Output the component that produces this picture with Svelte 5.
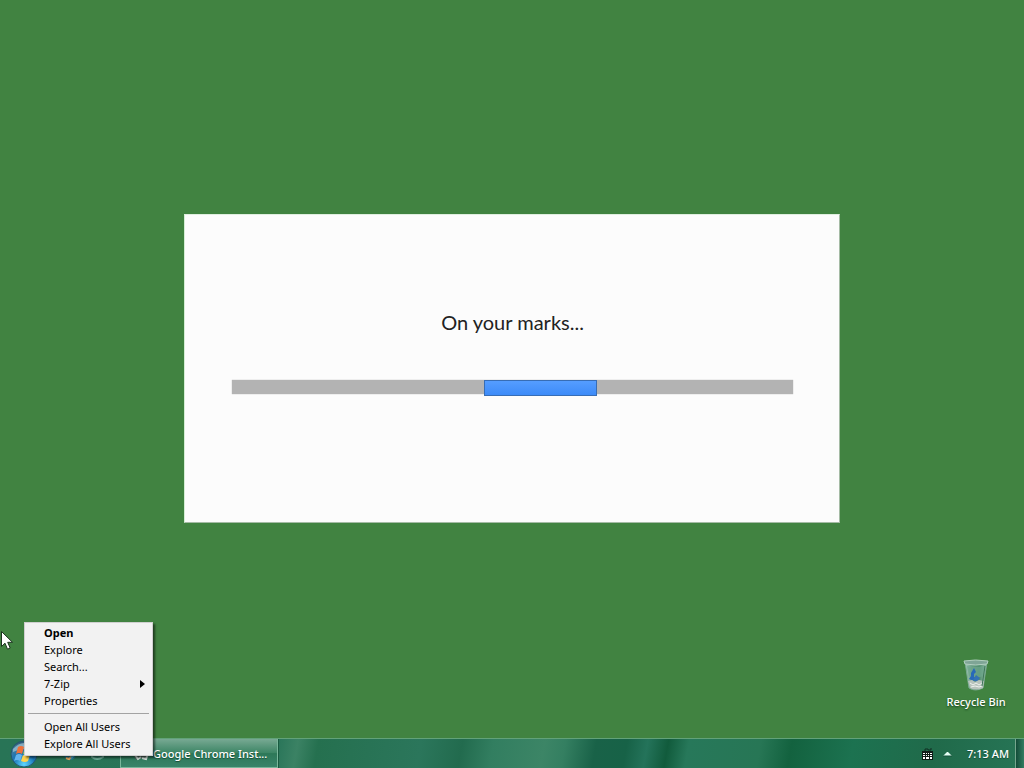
<script lang="ts">
  const groups = [
    ['Open', 'Explore', 'Search...', '7-Zip', 'Properties'],
    ['Open All Users', 'Explore All Users']
  ];
</script>

<main class="desktop">
  <section class="installer" aria-labelledby="status">
    <h1 id="status">On your marks...</h1>
    <div class="track" role="progressbar" aria-labelledby="status"><div class="chunk"></div></div>
  </section>

  <button class="bin">
    <svg width="26" height="32" viewBox="0 0 26 32" aria-hidden="true">
      <defs>
        <linearGradient id="glass" x1="0" x2="1" y1="0" y2="0">
          <stop offset="0" stop-color="#a5cbb8" />
          <stop offset=".3" stop-color="#6da088" />
          <stop offset=".65" stop-color="#4f8d6c" />
          <stop offset="1" stop-color="#a0c5b3" />
        </linearGradient>
      </defs>
      <path d="M2 3 6 29Q12 33 20 29L24 3Z" fill="url(#glass)" stroke="#79aa90" stroke-width="1" />
      <path d="M1 2Q12 0 25 2L24 5Q12 7 2 5Z" fill="#7fa596" stroke="#b2cfc0" stroke-width="1" />
      <path d="M4 7q8 2 18 0l-2 10q-7 3-14 0Z" fill="#6da58c" opacity=".7" />
      <path d="m8 14 3-5 2 4-2 2v3l3 1-3 3-5-2 2-3Z" fill="#2869b8" />
      <path d="m13 16 4 3-3 4-4-2Z" fill="#3472b3" />
      <path d="m5 22 4-1 3 2 4-2 5 1-1 7q-7 3-13 0Z" fill="#b8c3bc" />
      <path d="m7 24 3 2 3-2 3 2 3-2M8 28l4-1 4 1 3-1" fill="none" stroke="#eef1ee" />
      <path d="m22 7-3 20" stroke="#3d7559" />
    </svg>
    <span>Recycle Bin</span>
  </button>

  <footer class="taskbar">
    <button class="start" aria-label="Start">
      <svg width="28" height="28" viewBox="0 0 28 28" aria-hidden="true">
        <defs>
          <radialGradient id="orb" cx=".5" cy=".9" r=".85">
            <stop offset="0" stop-color="#5cd7ff" />
            <stop offset=".5" stop-color="#1873b5" />
            <stop offset=".85" stop-color="#467f9f" />
            <stop offset="1" stop-color="#315c79" />
          </radialGradient>
        </defs>
        <circle cx="14" cy="14" r="13" fill="url(#orb)" stroke="#24586e" />
        <path d="M3 9Q14-3 24 9 14 7 3 12Z" fill="#d8edf3" opacity=".45" />
        <path d="M8 7q3-2 6 0l-2 7q-3-2-6 0Z" fill="#ef713a" />
        <path d="M15 7q3 2 7 0l-2 7q-3 2-7 0Z" fill="#99c944" />
        <path d="M6 15q3-2 6 0l-2 6q-3-2-6 0Z" fill="#65b4ed" />
        <path d="M13 15q3 2 7 0l-2 6q-3 2-7 0Z" fill="#ffd34d" />
      </svg>
    </button>
    <div class="quick">
      <button aria-label="Media Player">
        <svg width="16" height="16" viewBox="0 0 16 16" aria-hidden="true">
          <circle cx="8" cy="8" r="6" fill="#257b9b" />
          <path d="m4 12 3 1 6-6" fill="none" stroke="#eea85c" stroke-width="2" />
          <path d="m9 12 5-5" stroke="#51b0d4" stroke-width="2" />
        </svg>
      </button>
      <button aria-label="Show desktop">
        <svg width="16" height="16" viewBox="0 0 16 16" aria-hidden="true">
          <path d="M2 4h11v7q-6 4-11 0Z" fill="#327d68" stroke="#72b39e" stroke-width="2" />
        </svg>
      </button>
    </div>
    <button class="task">
      <svg width="16" height="16" viewBox="0 0 16 16" aria-hidden="true">
        <path d="M2 3h11l2 8-3 4-4-2-5 2-2-4Z" fill="#51685f" />
        <path d="m2 10 3 4 3-2M9 13l4 1 2-5" fill="none" stroke="#d8e5df" stroke-width="2" />
      </svg>
      <span>Google Chrome Inst...</span>
    </button>
    <div class="tray">
      <button aria-label="Keyboard">
        <svg width="11" height="12" viewBox="0 0 11 12" aria-hidden="true">
          <path d="M3 3V1h3v1h3V0" fill="none" stroke="#102e23" />
          <path d="M0 3h11v9H0Z" fill="#101c18" />
          <path d="M1 5h2v1H1ZM4 5h1v1H4ZM6 5h1v1H6ZM8 5h2v1H8ZM1 7h2v1H1ZM4 7h1v1H4ZM6 7h1v1H6ZM8 7h2v1H8ZM1 9h2v2H1ZM4 9h3v2H4ZM8 9h2v2H8Z" fill="#fff" />
        </svg>
      </button>
      <button aria-label="Show hidden icons">
        <svg width="9" height="6" viewBox="0 0 9 6" aria-hidden="true">
          <path d="m0 5 4-4h1l4 4Z" fill="#e5fff3" />
          <path d="M0 5h9" stroke="#15513b" />
        </svg>
      </button>
      <time>7:13 AM</time>
    </div>
    <button class="peek" aria-label="Desktop peek"></button>
  </footer>

  <div class="menu" role="menu">
    {#each groups as group}
      <div class="group" role="group">
        {#each group as item}
          <button role="menuitem" class:default={item === 'Open'}>
            {item}
            {#if item === '7-Zip'}
              <svg width="5" height="8" viewBox="0 0 5 8" aria-hidden="true"><path d="m0 0 5 4-5 4Z" /></svg>
            {/if}
          </button>
        {/each}
      </div>
    {/each}
  </div>

  <svg class="cursor" width="12" height="19" viewBox="0 0 12 19" aria-hidden="true">
    <path d="M.5.5v15l3.500-3.300 2.500 6 2.700-1.200-2.500-5.700h4.800Z" fill="#fff" stroke="#1c3420" />
  </svg>
</main>

<style>
  :global(body) { margin: 0; }
  .desktop {
    position: relative;
    display: flex;
    flex-direction: column;
    min-height: 100vh;
    overflow: hidden;
    background: #418341;
    font: 11px/17px "Noto Sans", "Open Sans", sans-serif;
  }
  button {
    border: 0;
    padding: 0;
    background: none;
    color: inherit;
    font: inherit;
  }
  svg { display: block; flex: none; }
  .installer {
    position: absolute;
    top: 214px;
    left: 18%;
    right: 18%;
    box-sizing: border-box;
    height: 309px;
    padding: 91px 46px 0 47px;
    border: 1px solid #a5bba5;
    border-top-color: #e0efe0;
    border-left-color: #d5efd5;
    background: #fcfcfc;
  }
  h1 {
    margin: 0 0 42px;
    color: #222;
    font: 400 20px/32px Lato, "Open Sans", sans-serif;
    text-align: center;
  }
  .track {
    height: 14px;
    background: #b3b3b3;
    box-shadow: 0 0 1px #aaa;
  }
  .chunk {
    box-sizing: border-box;
    width: 20%;
    height: 16px;
    margin-left: 45%;
    border: 1px solid #376db5;
    background: linear-gradient(#559dff, #3d8bf8);
  }
  .bin {
    position: absolute;
    right: 16px;
    bottom: 58px;
    display: flex;
    flex-direction: column;
    align-items: center;
    gap: 2px;
    width: 64px;
    color: #fff;
    font-weight: 500;
    white-space: nowrap;
    text-shadow: 0 1px 2px #123d18;
  }
  .taskbar {
    display: flex;
    align-items: stretch;
    box-sizing: border-box;
    height: 30px;
    margin-top: auto;
    border-top: 1px solid #62a279;
    background:
      linear-gradient(100deg, #287456 0%, #297559 27%, #3b8264 29%, #25704f 31%, #2b765b 41%, #226b4e 45%, #327e60 48%, #3c8566 53%, #347f61 55%, #196248 58%, #176247 61%, #24735a 63%, #115b3c 65%, #27785a 67%, #277655 74%, #13623f 77%, #1c7250 83%, #206a4a 91%, #277556 100%);
    color: #fff;
    font-weight: 500;
  }
  .start { width: 28px; margin-left: 10px; }
  .quick { display: flex; align-items: center; gap: 12px; width: 58px; padding-left: 24px; }
  .task {
    display: flex;
    align-items: center;
    gap: 4px;
    box-sizing: border-box;
    width: 158px;
    padding-left: 12px;
    border: 1px solid #79b79b;
    border-top: 0;
    background: linear-gradient(#78a993, #3c8565 50%, #2d7858 52%, #39846a);
    box-shadow: 1px 0 #185a40;
    white-space: nowrap;
    text-shadow: 0 1px 1px #164b35;
  }
  .tray { display: flex; align-items: center; gap: 10px; margin-left: auto; padding-right: 6px; }
  time { margin-left: 5px; text-shadow: 0 1px 1px #174c38; }
  .peek {
    width: 9px;
    border-left: 1px solid #75a68e;
    background: linear-gradient(90deg, #124c38, #347c61);
  }
  .menu {
    position: absolute;
    left: 24px;
    bottom: 12px;
    box-sizing: border-box;
    width: 129px;
    padding: 1px 3px 3px;
    border: 1px solid #d0d0d0;
    background: #f2f2f2;
    box-shadow: 2px 2px 2px #0008;
  }
  .menu button {
    display: flex;
    align-items: center;
    justify-content: space-between;
    width: 100%;
    height: 17px;
    padding: 0 4px 0 16px;
    text-align: left;
  }
  .menu .default { font-weight: 700; }
  .group + .group { margin-top: 4px; padding-top: 4px; border-top: 1px solid #a3a3a3; }
  .cursor { position: absolute; left: 1px; bottom: 118px; }
</style>
